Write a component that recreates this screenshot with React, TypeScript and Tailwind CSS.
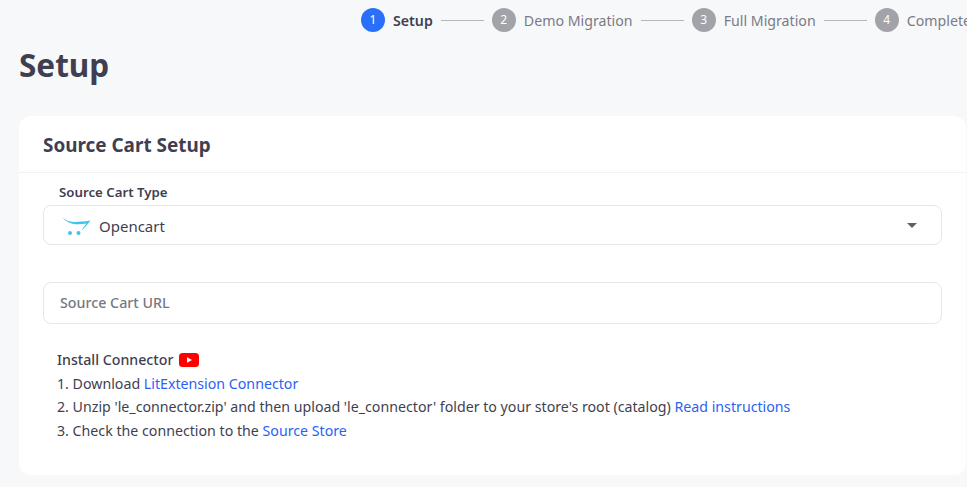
import React from "react"

const steps = [
  { n: 1, label: "Setup", active: true },
  { n: 2, label: "Demo Migration" },
  { n: 3, label: "Full Migration" },
  { n: 4, label: "Complete" },
]

function OpencartLogo() {
  return (
    <svg width="30" height="22" viewBox="0 0 30 22" className="shrink-0">
      <path d="M0.5 3.5C6 8.5 12 9 28.5 6.5C26 10 22 14 19.5 17C21 13.5 23.5 11 24.5 9.5C15 11.2 6 10.5 0.5 3.5Z" fill="#3fc3ee" />
      <circle cx="8" cy="19" r="2" fill="#3fc3ee" />
      <circle cx="16.5" cy="19" r="2" fill="#3fc3ee" />
    </svg>
  )
}

function YoutubeIcon() {
  return (
    <svg width="20" height="14" viewBox="0 0 20 14" className="shrink-0">
      <rect width="20" height="14" rx="3.5" fill="#f00" />
      <path d="M8 4.2L13 7L8 9.8Z" fill="#fff" />
    </svg>
  )
}

export default function App() {
  return (
    <div className="h-[487px] w-[967px] overflow-hidden bg-[#f7f8fa] font-['Noto_Sans',sans-serif] text-[#3f3f51]">
      <div className="flex h-[40px] items-center whitespace-nowrap pl-[361px]">
        {steps.map((s, i) => (
          <div key={s.n} className="flex shrink-0 items-center">
            <span
              className={
                "flex h-6 w-6 items-center justify-center rounded-full text-xs text-white " +
                (s.active ? "bg-[#2a6ffa]" : "bg-[#a1a3a8]")
              }
            >
              {s.n}
            </span>
            <span className={"ml-[8px] pt-[1px] text-[14.2px] " + (s.active ? "font-semibold text-[#3f3f51]" : "text-[#7a7b85]")}>
              {s.label}
            </span>
            {i < steps.length - 1 && <span className="mx-[8px] h-px w-[43px] bg-[#b5b6ba]" />}
          </div>
        ))}
      </div>

      <h1 className="ml-[19px] mt-[2px] text-[31.5px] font-bold leading-[46px]">Setup</h1>

      <div className="ml-[19px] mt-[28px] h-[359px] w-[947px] rounded-xl bg-white">
        <div className="flex h-[57px] items-center border-b border-[#f1f2f4] px-6 pt-[2px]">
          <h2 className="text-[18.9px] font-bold">Source Cart Setup</h2>
        </div>

        <div className="px-6">
          <label className="mt-[9px] block pl-4 text-[13.25px] font-semibold leading-[20px]">Source Cart Type</label>
          <div className="mt-[3px] flex h-[40px] items-center rounded-lg border border-[#e6e7ea] pl-[18px] pr-6">
            <OpencartLogo />
            <span className="ml-[7px] pt-[2px] text-[15px]">Opencart</span>
            <span className="ml-auto h-0 w-0 border-x-[5px] border-t-[5px] border-x-transparent border-t-[#5f6368]" />
          </div>

          <div className="mt-[37px] flex h-[42px] items-center rounded-lg border border-[#e6e7ea] px-4 text-[14.25px] font-medium text-[#76777f]">
            Source Cart URL
          </div>

          <div className="mt-[24px] pl-[14px] text-[14.2px] leading-[23.7px]">
            <div className="flex items-center gap-[6px] font-medium">
              Install Connector <YoutubeIcon />
            </div>
            <div>
              1. Download <a className="text-[#2a62f5]">LitExtension Connector</a>
            </div>
            <div>
              2. Unzip 'le_connector.zip' and then upload 'le_connector' folder to your store's root (catalog){" "}
              <a className="text-[#2a62f5]">Read instructions</a>
            </div>
            <div>
              3. Check the connection to the <a className="text-[#2a62f5]">Source Store</a>
            </div>
          </div>
        </div>
      </div>
    </div>
  )
}
